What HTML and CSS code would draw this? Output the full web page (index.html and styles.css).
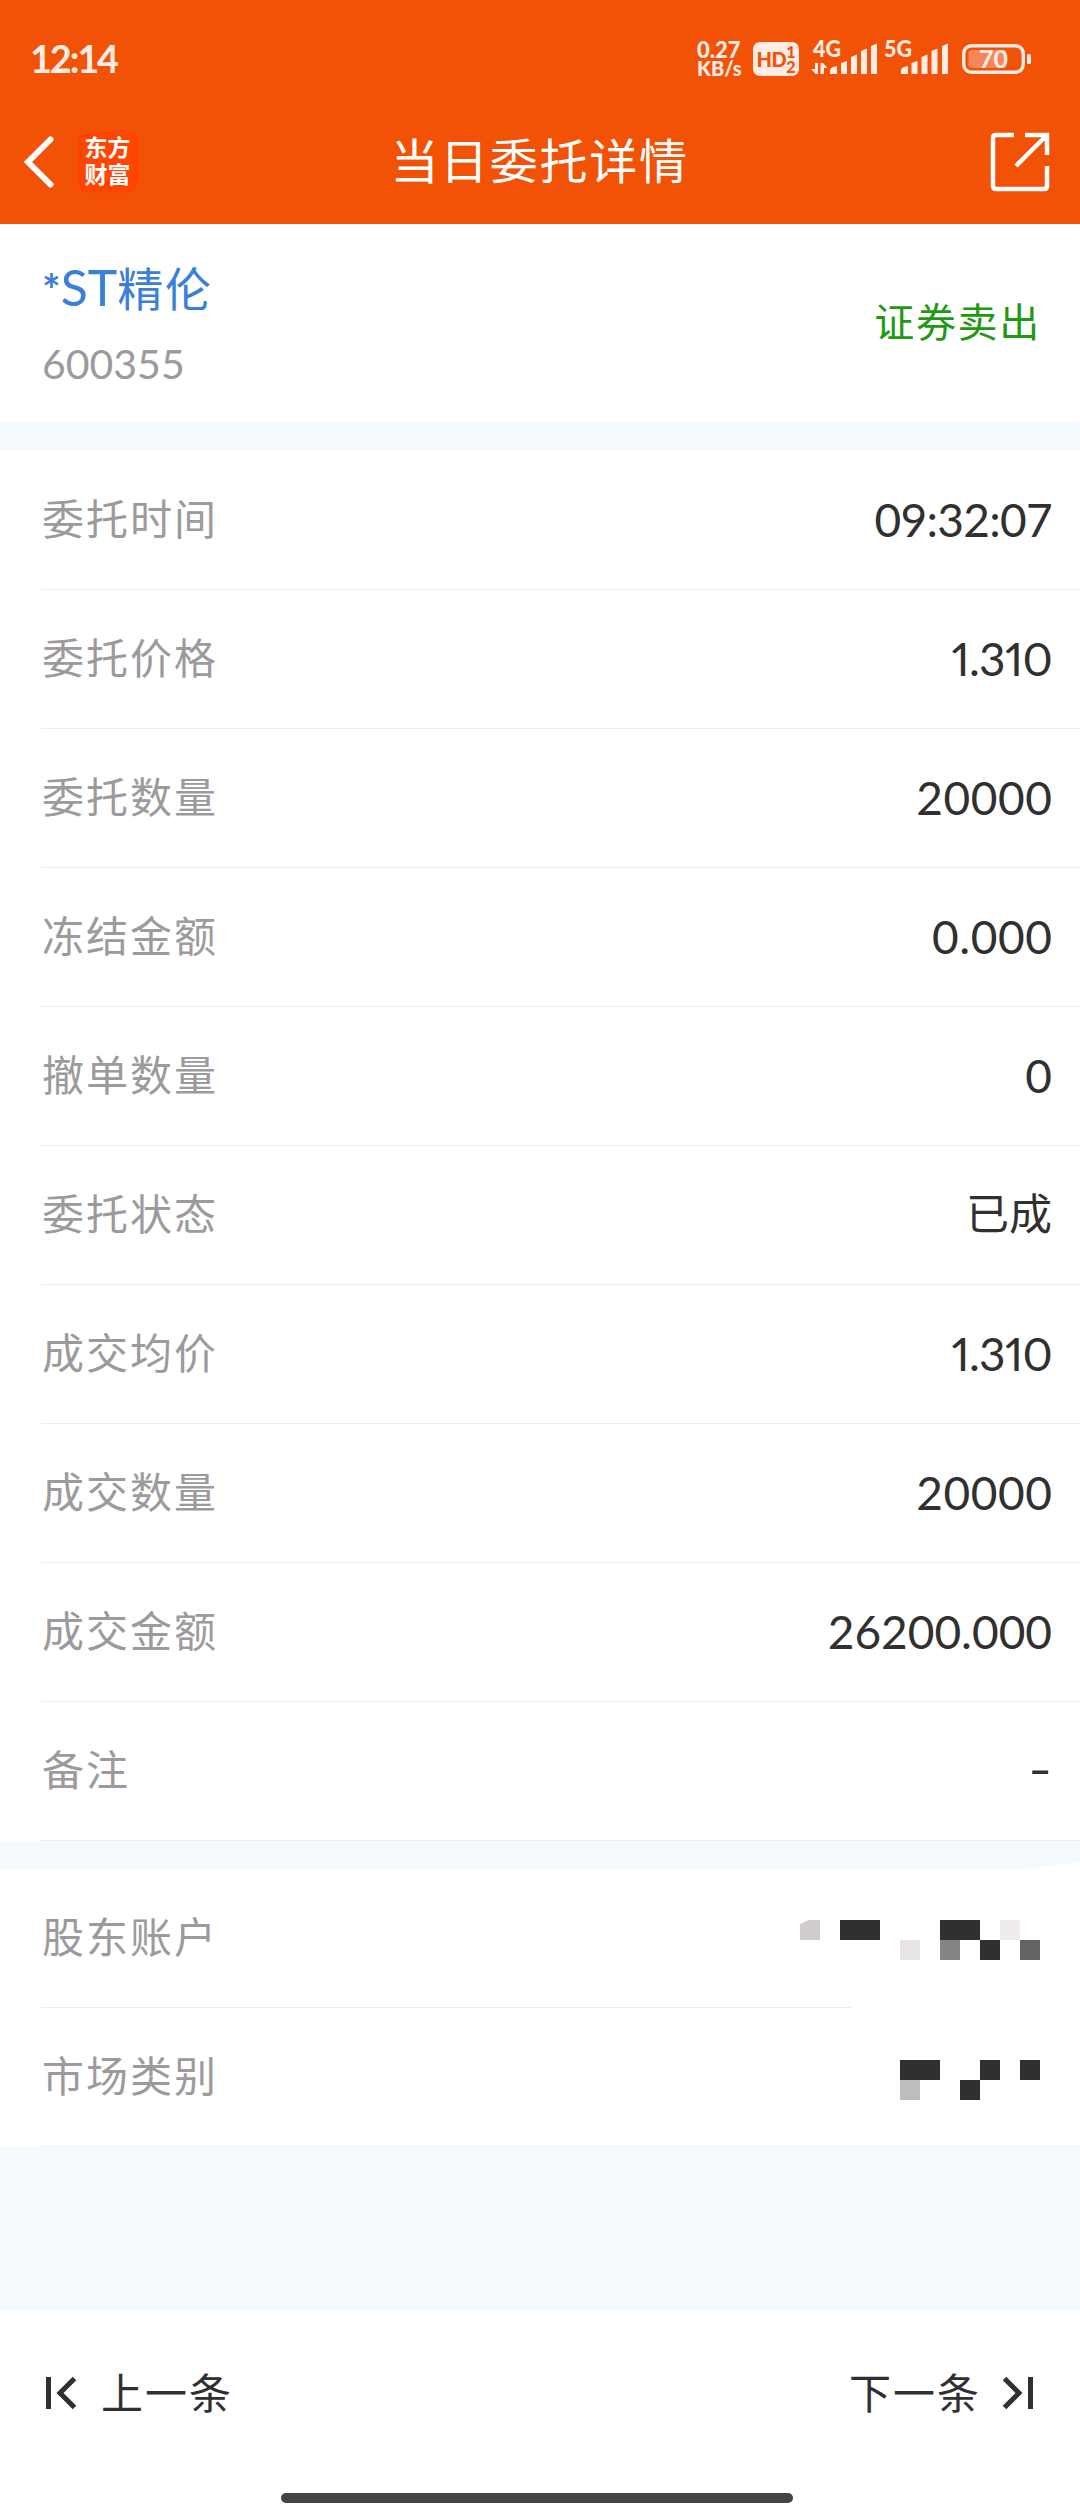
FILE: index.html
```html
<!DOCTYPE html>
<html lang="zh-CN">
<head>
    <meta charset="UTF-8">
    <meta name="viewport" content="width=device-width, initial-scale=1.0">
    <title>当日委托详情</title>
    <link rel="stylesheet" href="styles.css">
</head>
<body>
    <header class="header">
        <!-- 状态栏 -->
        <div class="status">
            <span class="clock">12:14</span>
            <div class="speed"><span class="num">0.27</span><span>KB/s</span></div>
            <div class="hd"><b>HD</b><span class="sim"><i>1</i><i>2</i></span></div>
            <svg class="signal" width="138" height="36" viewBox="0 0 138 36">
                <g fill="#ffece6">
                    <text class="net" x="1" y="16" textLength="28" lengthAdjust="spacingAndGlyphs">4G</text>
                    <text class="net" x="72" y="16" textLength="28" lengthAdjust="spacingAndGlyphs">5G</text>
                    <path d="M6 22v11H3.600L-1 28h4v-6zM8.500 33V22H11l4.500 5H12v6z"/>
                    <path d="M18 33v-3q0-3 3-4l4-1v8zM29 33V22l6-2v13zM39 33V16l6-2.500V33zM49 33V10l6-2.500V33zM59 33V5l6-2.500V33z"/>
                    <path d="M89 33v-3q0-3 3-4l4-1v8zM99.500 33V22l6-2v13zM109.500 33V16l6-2.500V33zM119.500 33V10l6-2.500V33zM130 33V5l6-2.500V33z"/>
                </g>
            </svg>
            <svg class="battery" width="70" height="30" viewBox="0 0 70 30">
                <rect x="1.700" y="1.700" width="59.600" height="26.600" rx="8" fill="none" stroke="#ffece6" stroke-width="3.400"/>
                <rect x="6.500" y="6" width="38" height="18" rx="3" fill="#f5855a"/>
                <rect x="65" y="10" width="4" height="10" rx="1.500" fill="#ffece6"/>
                <text class="level" x="31.500" y="23.500" text-anchor="middle" fill="#ffece6">70</text>
            </svg>
        </div>
        <!-- 标题栏 -->
        <div class="nav">
            <svg class="back" width="30" height="52" viewBox="0 0 30 52">
                <path d="M27.500 3.500L5 26l22.500 22.500" fill="none" stroke="#fff" stroke-width="6" stroke-linecap="round"/>
            </svg>
            <div class="logo"><span>东方</span><span>财富</span></div>
            <h1>当日委托详情</h1>
            <svg class="share" width="60" height="60" viewBox="0 0 60 60" fill="none" stroke="#fff" stroke-width="4.500">
                <path d="M24 3H6Q3 3 3 6v48q0 3 3 3h48q3 0 3-3V34M35 3h22v20M56 4L26 34"/>
            </svg>
        </div>
    </header>

    <section class="stock">
        <div>
            <div class="name"><span class="star">*</span><span class="st">ST</span>精伦</div>
            <div class="code">600355</div>
        </div>
        <div class="side">证券卖出</div>
    </section>

    <section class="list">
        <div class="row"><span class="label">委托时间</span><span class="value time">09:32:07</span></div>
        <div class="row"><span class="label">委托价格</span><span class="value price">1.310</span></div>
        <div class="row"><span class="label">委托数量</span><span class="value count">20000</span></div>
        <div class="row"><span class="label">冻结金额</span><span class="value count">0.000</span></div>
        <div class="row"><span class="label">撤单数量</span><span class="value">0</span></div>
        <div class="row"><span class="label">委托状态</span><span class="value cn">已成</span></div>
        <div class="row"><span class="label">成交均价</span><span class="value price">1.310</span></div>
        <div class="row"><span class="label">成交数量</span><span class="value count">20000</span></div>
        <div class="row"><span class="label">成交金额</span><span class="value">26200.000</span></div>
        <div class="row"><span class="label">备注</span><span class="value dash">-</span></div>
    </section>

    <svg class="gap" width="1080" height="28" viewBox="0 0 1080 28">
        <path d="M0 0H1080V21L1056 24L1027 28H0z" fill="#f5faff"/>
    </svg>

    <section class="list account">
        <div class="row short"><span class="label">股东账户</span>
            <svg class="mask" width="240" height="40" viewBox="0 0 240 40">
                <path d="M0 20V4L9 0H20V20z" fill="#cfcbce"/>
                <path d="M40 0h40v20H40zM140 0h40v20h-40zM180 20h20v20h-20z" fill="#303030"/>
                <path d="M100 20h20v20h-20z" fill="#e7e3e6"/>
                <path d="M140 20h20v20h-20z" fill="#858385"/>
                <path d="M200 0h20v20h-20z" fill="#efebef"/>
                <path d="M220 20h20v20h-20z" fill="#636562"/>
            </svg>
        </div>
        <div class="row"><span class="label">市场类别</span>
            <svg class="mask market" width="140" height="40" viewBox="0 0 140 40">
                <path d="M0 0h40v20H0zM80 0h20v20H80zM120 0h20v20h-20zM60 20h20v20H60z" fill="#303030"/>
                <path d="M0 20h20v20H0z" fill="#bebebe"/>
            </svg>
        </div>
    </section>

    <footer class="footer">
        <div class="pager">
            <a class="page">
                <svg width="32" height="34" viewBox="0 0 32 34" fill="none" stroke="#303030" stroke-width="5">
                    <path d="M4.500 1v32M30.500 2.500L16 17 30.500 31.500"/>
                </svg>
                <span>上一条</span>
            </a>
            <a class="page next">
                <span>下一条</span>
                <svg width="32" height="34" viewBox="0 0 32 34" fill="none" stroke="#303030" stroke-width="5">
                    <path d="M27.500 1v32M1.500 2.500L16 17 1.500 31.500"/>
                </svg>
            </a>
        </div>
        <div class="home"></div>
    </footer>
</body>
</html>
```

FILE: styles.css
```css
* {
    box-sizing: border-box;
}
body {
    margin: 0;
    width: 1080px;
    height: 2520px;
    display: flex;
    flex-direction: column;
    background: #f5faff;
    font-family: Lato, "Noto Sans CJK SC", sans-serif;
    color: #303030;
}
svg {
    display: block;
    flex: none;
    overflow: visible;
}

/* 顶部 */
.header {
    height: 224px;
    background: #f25205;
    color: #fff;
}
.status {
    height: 118px;
    display: flex;
    align-items: center;
    padding: 0 48px 0 30px;
    color: #ffece6;
}
.clock {
    font-size: 38px;
    font-weight: 700;
    letter-spacing: -2.2px;
    margin-right: auto;
    padding-bottom: 3px;
}
.speed {
    width: 48px;
    display: flex;
    flex-direction: column;
    font-size: 20px;
    line-height: 19px;
    font-weight: 900;
    white-space: nowrap;
}
.num {
    font-size: 22px;
}
.hd {
    width: 46px;
    height: 34px;
    margin: 0 13px 0 8px;
    border-radius: 7px;
    background: #ffece6;
    color: #f25205;
    display: flex;
    align-items: center;
    justify-content: center;
    font-size: 20px;
}
.hd b {
    font-weight: 900;
    letter-spacing: -0.5px;
}
.sim {
    display: flex;
    flex-direction: column;
    font-size: 16px;
    line-height: 15px;
    font-weight: 900;
}
.sim i {
    font-style: normal;
}
.net {
    font-size: 22px;
    font-weight: 900;
}
.battery {
    margin-left: 12px;
}
.level {
    font-size: 25px;
    font-weight: 700;
}

.nav {
    height: 88px;
    display: flex;
    align-items: center;
    padding: 0 30px 0 23px;
}
.logo {
    width: 62px;
    height: 62px;
    margin-left: 24px;
    padding: 0 1px 4px 0;
    border-radius: 14px;
    background: #ff4500;
    display: flex;
    flex-direction: column;
    align-items: center;
    justify-content: center;
    font-family: "Noto Sans CJK SC", sans-serif;
    font-size: 23px;
    line-height: 27px;
    font-weight: 700;
}
.nav h1 {
    flex: 1;
    margin: 0;
    padding: 0 50px 2px 0;
    text-align: center;
    font-size: 48px;
    line-height: 60px;
    font-weight: 400;
    letter-spacing: 1.7px;
}

/* 股票信息 */
.stock {
    height: 199px;
    padding: 0 39px 0 42px;
    display: flex;
    justify-content: space-between;
    background: #fff;
}
.name {
    height: 66px;
    margin-top: 30px;
    line-height: 66px;
    font-size: 46px;
    letter-spacing: 1.6px;
    color: #3b80d8;
}
.st {
    font-size: 50px;
    letter-spacing: 0;
}
.star {
    font-size: 44px;
    font-weight: 700;
    letter-spacing: 0;
}
.code {
    margin-top: 19px;
    line-height: 50px;
    font-size: 41px;
    color: #9c9a9c;
}
.side {
    line-height: 197px;
    font-size: 40px;
    letter-spacing: 1.7px;
    color: #1f9913;
}

/* 明细列表 */
.list {
    margin-top: 28px;
    background: #fff;
}
.gap {
    background: #fff;
}
.account {
    margin-top: 0;
}
.row {
    height: 139px;
    display: flex;
    align-items: center;
    justify-content: space-between;
    padding: 0 28px 0 42px;
    background: linear-gradient(#ededed, #ededed) no-repeat 41px 100% / 1039px 1px;
}
.short {
    background-size: 811px 1px;
}
.label {
    padding-bottom: 8px;
    font-size: 42px;
    letter-spacing: 2px;
    color: #9c9a9c;
}
.value {
    padding-bottom: 3px;
    font-size: 46px;
}
.time {
    letter-spacing: -0.7px;
}
.price {
    font-feature-settings: "pnum";
    letter-spacing: -0.7px;
}
.count {
    letter-spacing: 0.6px;
    margin-right: -0.6px;
}
.cn {
    padding-bottom: 9px;
    font-size: 43px;
}
.dash {
    padding-bottom: 6px;
    transform: scaleX(1.4);
    transform-origin: right;
}
.mask {
    margin: 3px 12px 0 0;
}
.market {
    margin-top: 5px;
}

/* 底部翻页 */
.footer {
    height: 209px;
    margin-top: auto;
    background: #fff;
    display: flex;
    flex-direction: column;
    align-items: center;
}
.pager {
    width: 100%;
    height: 164px;
    padding: 0 45px 0 44px;
    display: flex;
    justify-content: space-between;
}
.page {
    display: flex;
    align-items: center;
    gap: 25px;
    font-size: 42px;
    letter-spacing: 2px;
}
.page span {
    padding-bottom: 5px;
}
.next {
    gap: 22px;
}
.home {
    width: 512px;
    height: 10px;
    margin: 18px 6px 0 0;
    border-radius: 5px;
    background: #424542;
}
```
